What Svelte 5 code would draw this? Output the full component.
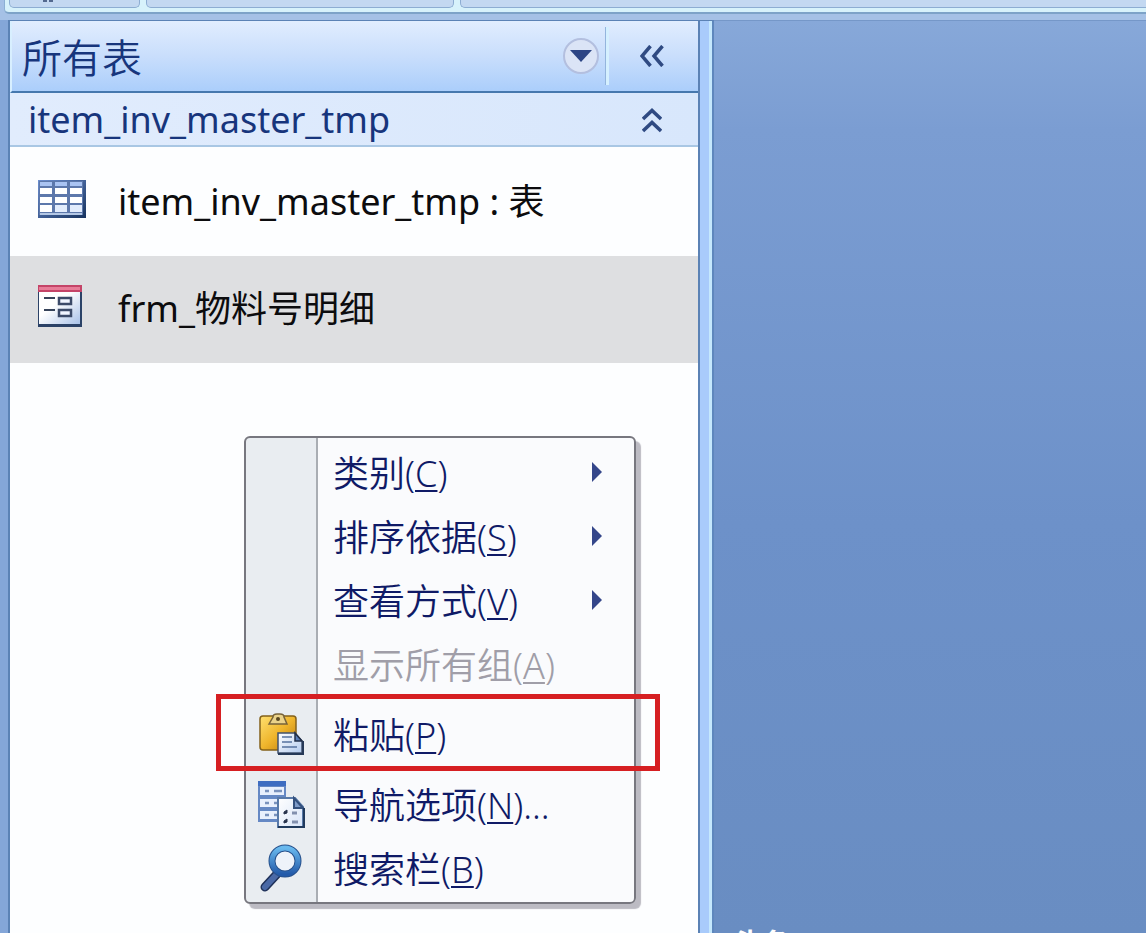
<script lang="ts">
  interface MenuItem {
    id: string;
    label: string;
    key: string;
    tail?: string;
    submenu?: boolean;
    disabled?: boolean;
    icon?: 'paste' | 'options' | 'search';
  }

  const tableName = 'item_inv_master_tmp';

  const objects = [
    { id: 'table', icon: 'table', name: 'item_inv_master_tmp : 表' },
    { id: 'form', icon: 'form', name: 'frm_物料号明细' }
  ];

  const menuItems: MenuItem[] = [
    { id: 'category', label: '类别', key: 'C', submenu: true },
    { id: 'sort', label: '排序依据', key: 'S', submenu: true },
    { id: 'view', label: '查看方式', key: 'V', submenu: true },
    { id: 'groups', label: '显示所有组', key: 'A', disabled: true },
    { id: 'paste', label: '粘贴', key: 'P', icon: 'paste' },
    { id: 'options', label: '导航选项', key: 'N', tail: '...', icon: 'options' },
    { id: 'search', label: '搜索栏', key: 'B', icon: 'search' }
  ];

  let selectedId = $state('form');
</script>

<div class="app">
  <div class="ribbon">
    <div class="ribbon-groups">
      <div class="ribbon-group first"></div>
      <div class="ribbon-group second"></div>
      <div class="ribbon-group rest"></div>
    </div>
  </div>

  <div class="body">
    <aside class="nav-pane">
      <header class="nav-header">
        <h1>所有表</h1>
        <button class="round-button" aria-label="选择类别">
          <svg width="22" height="12" viewBox="0 0 22 12">
            <path d="M0 0h22L11 12z" fill="#2c4585" />
          </svg>
        </button>
        <button class="collapse-button" aria-label="折叠导航窗格">
          <svg width="24" height="22" viewBox="0 0 24 22" fill="none" stroke="#2f4a82" stroke-width="3.5">
            <path d="M10.500 1L2 11l8.500 10M22.500 1L14 11l8.500 10" />
          </svg>
        </button>
      </header>

      <button class="group-header">
        <span>{tableName}</span>
        <svg width="20" height="25" viewBox="0 0 20 25" fill="none" stroke="#2f4a82" stroke-width="3.5">
          <path d="M1 11l9-8.500L19 11M1 23l9-8.500L19 23" />
        </svg>
      </button>

      <ul class="objects">
        {#each objects as object}
          <li>
            <button
              class="object"
              class:selected={selectedId === object.id}
              onclick={() => (selectedId = object.id)}
            >
              {#if object.icon === 'table'}
                <svg width="50" height="40" viewBox="0 0 50 40">
                  <defs>
                    <linearGradient id="table-edge" x1="0" y1="0" x2="1" y2="1">
                      <stop offset="0" stop-color="#6d8fd0" />
                      <stop offset="1" stop-color="#17335f" />
                    </linearGradient>
                  </defs>
                  <rect x="1" y="1" width="48" height="38" fill="url(#table-edge)" />
                  <rect x="2" y="2" width="44" height="34" fill="#5d78ab" />
                  <path d="M3 3h12v4H3zM18 3h12v4H18zM33 3h12v4H33z" fill="#a9c3f2" />
                  <path
                    d="M3 9h12v6H3zM18 9h12v6H18zM33 9h12v6H33zM3 18h12v6H3zM18 18h12v6H18zM33 18h12v6H33zM3 26h12v7H3z"
                    fill="#fff"
                  />
                  <path d="M18 26h12v7H18zM33 26h12v7H33z" fill="#e2ecfc" />
                  <path d="M3 34h42v2H3z" fill="#b4c8e6" />
                </svg>
              {:else}
                <svg width="50" height="44" viewBox="0 0 50 44">
                  <defs>
                    <linearGradient id="form-face" x1="0" y1="0" x2="1" y2="1">
                      <stop offset="0.400" stop-color="#fff" />
                      <stop offset="1" stop-color="#a9c2e8" />
                    </linearGradient>
                  </defs>
                  <rect x="1" y="1" width="44" height="42" fill="#2b4267" />
                  <rect x="2" y="7" width="41" height="33" fill="url(#form-face)" />
                  <rect x="1" y="1" width="44" height="7" fill="#c44468" />
                  <rect x="2" y="3" width="41" height="3" fill="#e87c98" />
                  <path d="M7 14h11M7 26h11" stroke="#36435a" stroke-width="2" />
                  <path d="M22 14h12v6H22zM22 26h12v6H22z" fill="#f0f5ff" stroke="#3b4a68" stroke-width="2.500" />
                </svg>
              {/if}
              <span>{object.name}</span>
            </button>
          </li>
        {/each}
      </ul>
    </aside>

    <div class="splitter"></div>

    <main class="workspace">
      <span class="watermark">头条</span>
    </main>
  </div>

  <div class="context-menu" role="menu">
    {#each menuItems as item}
      <button class="menu-item" class:marked={item.id === 'paste'} role="menuitem" disabled={item.disabled}>
        <span class="menu-icon">
          {#if item.icon === 'paste'}
            <svg width="48" height="44" viewBox="0 0 48 44">
              <defs>
                <linearGradient id="board" x1="0" y1="0" x2="1" y2="1">
                  <stop offset="0" stop-color="#ffe070" />
                  <stop offset="0.500" stop-color="#efb52c" />
                  <stop offset="1" stop-color="#b97808" />
                </linearGradient>
                <linearGradient id="sheet" x1="0" y1="0" x2="1" y2="1">
                  <stop offset="0" stop-color="#fff" />
                  <stop offset="1" stop-color="#b2caee" />
                </linearGradient>
              </defs>
              <rect x="3" y="4" width="36" height="34" rx="3" fill="url(#board)" stroke="#84621b" stroke-width="1.500" />
              <path d="M12 12l4-7q0-3 4-3h3q4 0 4 3l3 7z" fill="#ead28a" stroke="#77633a" stroke-width="1.500" />
              <circle cx="21" cy="7" r="2" fill="#594721" />
              <path d="M21 21h17l7 8v12H21z" fill="url(#sheet)" stroke="#40516e" stroke-width="1.500" />
              <path d="M38 21v8h7z" fill="#577bb5" stroke="#222f48" stroke-width="1.500" />
              <path d="M25 25h10M25 30h10M25 35h15" stroke="#55729f" stroke-width="1.500" />
              <path d="M21 42h25V29" fill="none" stroke="#263957" stroke-width="2" />
            </svg>
          {:else if item.icon === 'options'}
            <svg width="48" height="48" viewBox="0 0 48 48">
              <defs>
                <linearGradient id="page" x1="0" y1="0" x2="1" y2="1">
                  <stop offset="0" stop-color="#fff" />
                  <stop offset="1" stop-color="#d7e4f8" />
                </linearGradient>
              </defs>
              <rect x="1" y="1" width="28" height="41" fill="#6588c4" />
              <rect x="1" y="1" width="28" height="5" fill="#3e6dc1" />
              <path d="M3 7h24v8H3zM3 19h24v8H3zM3 31h24v8H3z" fill="#e9f0fd" />
              <path d="M8 11h4M17 11h8M8 23h4M17 23h7M8 35h4M17 35h7" stroke="#7a92bd" stroke-width="2.500" />
              <path d="M21 18h17l8 9v20H21z" fill="url(#page)" stroke="#5879a8" stroke-width="2" />
              <path d="M37 18v10h9z" fill="#7e9bc8" stroke="#34517d" stroke-width="2" />
              <path d="M21 47h26V28" fill="none" stroke="#203a5d" stroke-width="2" />
              <path d="M27 32l3-2v3l-3 1zM27 41l3-2v3l-3 1z" fill="#26334c" stroke="#26334c" />
              <path d="M35 33h5M35 42h6" stroke="#8290ae" stroke-width="3" />
            </svg>
          {:else if item.icon === 'search'}
            <svg width="48" height="48" viewBox="0 0 48 48">
              <defs>
                <linearGradient id="ring" x1="0" y1="0" x2="0" y2="1">
                  <stop offset="0" stop-color="#69b9ee" />
                  <stop offset="1" stop-color="#235aa9" />
                </linearGradient>
              </defs>
              <path d="M20 30L8 43" stroke="#1f3159" stroke-width="9" stroke-linecap="round" />
              <path d="M20 30L8 43" stroke="#4a69a6" stroke-width="6" stroke-linecap="round" />
              <circle cx="28" cy="17" r="13" fill="#eef3fa" stroke="#27518c" stroke-width="7" />
              <circle cx="28" cy="17" r="13" fill="none" stroke="url(#ring)" stroke-width="5" />
            </svg>
          {/if}
        </span>
        <span class="menu-label">{item.label}(<u>{item.key}</u>){item.tail ?? ''}</span>
        {#if item.submenu}
          <svg class="arrow" width="10" height="20" viewBox="0 0 10 20">
            <path d="M0 0l10 10L0 20z" fill="#34468a" />
          </svg>
        {/if}
      </button>
    {/each}
  </div>
</div>

<style>
  :global(body) {
    margin: 0;
  }

  .app {
    position: relative;
    display: flex;
    flex-direction: column;
    min-height: 100vh;
    overflow: hidden;
    background: #84a6d8;
    font-family: 'Noto Sans', 'Noto Sans CJK SC', sans-serif;
  }

  button {
    margin: 0;
    padding: 0;
    border: 0;
    background: none;
    color: inherit;
    font: inherit;
    text-align: left;
  }

  svg {
    display: block;
    flex: none;
  }

  .ribbon {
    box-sizing: border-box;
    height: 20px;
    padding-left: 4px;
    background: #a5c1e6;
  }

  .ribbon-groups {
    box-sizing: border-box;
    display: flex;
    gap: 6px;
    height: 14px;
    padding: 0 0 4px 4px;
    border-bottom: 2px solid #7da3c8;
    border-left: 1px solid #8cb0d4;
    border-bottom-left-radius: 5px;
    background: #d7f2fb;
  }

  .ribbon-group {
    box-sizing: border-box;
    border: 1px solid #8dadd2;
    border-top: 0;
    border-radius: 0 0 5px 5px;
    background: #c3d8f1;
  }

  .first {
    width: 131px;
    padding-left: 33px;
  }

  /* foot of the group caption */
  .first::before {
    content: '';
    display: block;
    width: 10px;
    height: 2px;
    background: linear-gradient(90deg, #53698f 4px, transparent 4px, transparent 6px, #53698f 6px);
  }

  .second {
    width: 308px;
  }

  .rest {
    flex: 1;
    border-right: 0;
    border-bottom-right-radius: 0;
  }

  .body {
    flex: 1;
    display: flex;
    padding-left: 8px;
  }

  .nav-pane {
    box-sizing: border-box;
    width: 692px;
    border: 2px solid #5b82b5;
    border-width: 1px 2px 0;
    background: #fdfeff;
  }

  .nav-header {
    box-sizing: border-box;
    display: flex;
    align-items: center;
    height: 72px;
    padding-left: 10px;
    border-bottom: 2px solid #4678ae;
    border-left: 2px solid #d8efff;
    background: linear-gradient(#e1edfe, #c9defc 50%, #abcefb);
  }

  h1 {
    flex: 1;
    margin: 0;
    padding-top: 4px;
    color: #17357c;
    font-size: 40px;
    font-weight: 350;
    line-height: 56px;
  }

  .round-button {
    box-sizing: border-box;
    display: flex;
    align-items: center;
    justify-content: center;
    width: 36px;
    height: 36px;
    margin-right: 6px;
    border: 2px solid #b3bfdf;
    border-radius: 50%;
    background: #dbe4f6;
  }

  .collapse-button {
    box-sizing: border-box;
    display: flex;
    align-items: center;
    justify-content: center;
    width: 93px;
    height: 58px;
    border-left: 1px solid #94b5dd;
    box-shadow: inset 3px 0 #d5f0ff;
  }

  .group-header {
    box-sizing: border-box;
    display: flex;
    align-items: center;
    justify-content: space-between;
    width: 100%;
    height: 54px;
    padding: 2px 36px 0 18px;
    border-bottom: 2px solid #a9c7e4;
    background: linear-gradient(90deg, #e1ecfd, #d8e7fc);
    color: #17357c;
    font-size: 36px;
    line-height: 52px;
  }

  .objects {
    margin: 0;
    padding: 2px 0 0;
    list-style: none;
  }

  .object {
    box-sizing: border-box;
    display: flex;
    align-items: center;
    gap: 31px;
    width: 100%;
    height: 107px;
    padding: 0 0 2px 27px;
    color: #0c0c0e;
    font-size: 36px;
    line-height: 52px;
  }

  .object svg {
    margin-bottom: 6px;
  }

  .object.selected {
    background: #dedfe1;
  }

  .splitter {
    box-sizing: border-box;
    width: 14px;
    border-top: 1px solid #5b82b5;
    border-right: 2px solid #5e87bd;
    background: linear-gradient(90deg, #a9cbfb 9px, #c5e8fd 9px);
  }

  .workspace {
    flex: 1;
    position: relative;
    overflow: hidden;
    border-top: 1px solid #7597c8;
    background: linear-gradient(#87a8d9, #7b9dd2 12%, #6d91c9 55%, #698dc2);
  }

  .watermark {
    position: absolute;
    top: 100%;
    left: 20px;
    margin-top: -6px;
    color: #fff;
    font-size: 28px;
    font-weight: 700;
    line-height: 32px;
  }

  .context-menu {
    position: absolute;
    top: 436px;
    left: 244px;
    box-sizing: border-box;
    width: 392px;
    padding-top: 4px;
    border: 2px solid #77777f;
    border-radius: 6px;
    background: linear-gradient(90deg, #e9edf1 70px, #a9adb3 70px, #a9adb3 72px, #fafbfd 72px);
    box-shadow: 5px 5px 1px #bcbbc3;
    color: #0f1a66;
    font-size: 36px;
    font-weight: 350;
  }

  .menu-item {
    position: relative;
    display: flex;
    align-items: center;
    width: 100%;
    height: 64px;
  }

  .menu-item:disabled {
    color: #a09ea8;
  }

  .menu-icon {
    display: flex;
    justify-content: center;
    box-sizing: border-box;
    width: 72px;
    margin-right: 15px;
    padding: 0 3px 4px 0;
  }

  .menu-label {
    flex: 1;
    line-height: 52px;
    white-space: nowrap;
  }

  u {
    text-decoration-thickness: 2px;
    text-underline-offset: 3px;
  }

  .arrow {
    margin: 0 32px 4px 0;
  }

  .marked {
    height: 76px;
  }

  /* red callout reaching past both edges of the menu */
  .marked::after {
    content: '';
    position: absolute;
    inset: -4px -26px 3px -30px;
    border: 5px solid #d61f22;
  }
</style>
